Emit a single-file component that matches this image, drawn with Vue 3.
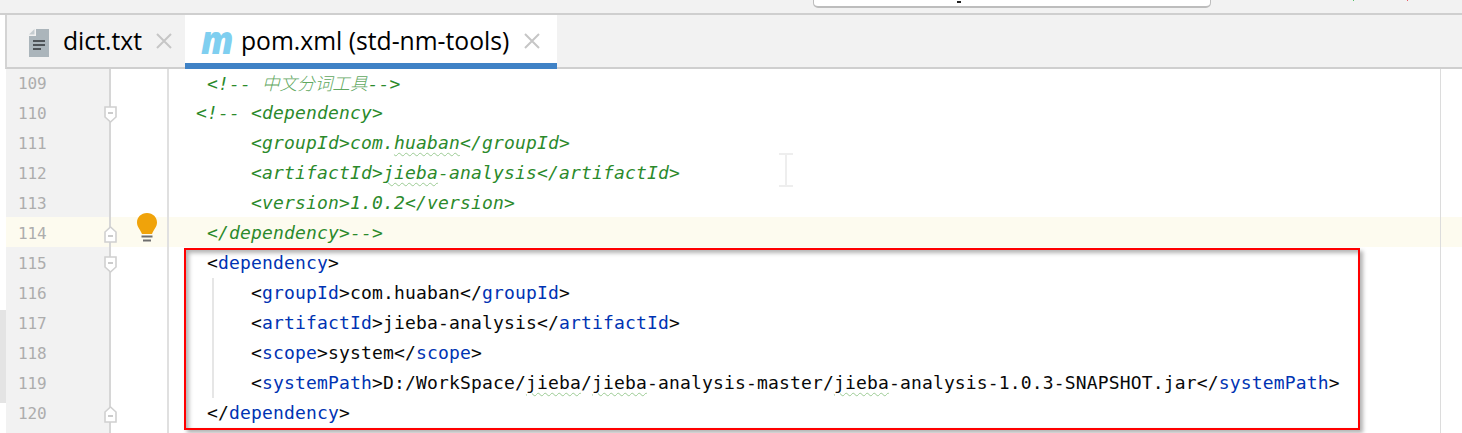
<script setup>
const tag = (open, name, rest = '') => [
  { k: 'p', t: open + '' },
  { k: 'n', t: name },
  { k: 'p', t: '>' + rest }
]
const com = (t, w) => ({ k: w ? 'c w' : 'c', t })
const lines = [
  { no: 109, segs: [com(' <!-- '), { k: 'c cjk', t: '中文分词工具' }, com('-->')] },
  { no: 110, fold: 'down', segs: [com('<!-- <dependency>')] },
  { no: 111, segs: [com('     <groupId>com.'), com('huaban', 1), com('</groupId>')] },
  { no: 112, segs: [com('     <artifactId>'), com('jieba', 1), com('-analysis</artifactId>')] },
  { no: 113, segs: [com('     <version>1.0.2</version>')] },
  { no: 114, fold: 'up', bulb: true, current: true, segs: [com(' </dependency>-->')] },
  { no: 115, fold: 'down', segs: tag(' <', 'dependency') },
  { no: 116, segs: [...tag('     <', 'groupId', 'com.huaban'), ...tag('</', 'groupId')] },
  { no: 117, segs: [...tag('     <', 'artifactId', 'jieba-analysis'), ...tag('</', 'artifactId')] },
  { no: 118, segs: [...tag('     <', 'scope', 'system'), ...tag('</', 'scope')] },
  {
    no: 119,
    segs: [
      ...tag('     <', 'systemPath', 'D:/WorkSpace/'),
      { k: 'p w', t: 'jieba' },
      { k: 'p', t: '/' },
      { k: 'p w', t: 'jieba' },
      { k: 'p', t: '-analysis-master/' },
      { k: 'p w', t: 'jieba' },
      { k: 'p', t: '-analysis-1.0.3-SNAPSHOT.jar' },
      ...tag('</', 'systemPath')
    ]
  },
  { no: 120, fold: 'up', segs: tag(' </', 'dependency') },
  { no: 121, hidden: true, segs: [] }
]
</script>

<template>
  <div class="page">
    <header class="top">
      <div class="search"><i class="speck"></i></div>
      <i class="dot green"></i>
      <i class="dot red"></i>
    </header>

    <nav class="tabs">
      <div class="tab">
        <svg class="file" width="20" height="28" viewBox="0 0 20 28">
          <path d="M7 0H20V28H0V7H7Z" fill="#abb5bb" />
          <path d="M5.500 0V5.500H0Z" fill="#c5ccd0" />
          <path d="M4 12H16M4 16H16M4 20H12" stroke="#4e5357" stroke-width="2" />
        </svg>
        <span class="label">dict.txt</span>
        <svg class="close" width="16" height="16" viewBox="0 0 16 16">
          <path d="M1 1L15 15M15 1L1 15" stroke="#c6c6c6" stroke-width="2" />
        </svg>
      </div>
      <div class="tab active">
        <span class="maven">m</span>
        <span class="label">pom.xml (std-nm-tools)</span>
        <svg class="close" width="16" height="16" viewBox="0 0 16 16">
          <path d="M1 1L15 15M15 1L1 15" stroke="#c6c6c6" stroke-width="2" />
        </svg>
      </div>
    </nav>

    <main class="editor">
      <div class="strip"><i class="thumb"></i></div>
      <div class="rows">
        <div v-for="l in lines" :key="l.no" class="row" :class="{ current: l.current }">
          <div class="num">
            <span v-if="!l.hidden">{{ l.no }}</span>
            <svg v-if="l.fold" class="fold" :class="l.fold" width="13" height="17" viewBox="0 0 13 17">
              <path d="M1 1H12V11L6.500 16L1 11Z" fill="#fff" stroke="#d0d0d0" stroke-width="1.600" />
              <path d="M4 7H9" stroke="#c0c0c0" stroke-width="1.600" />
            </svg>
          </div>
          <div class="mark">
            <svg v-if="l.bulb" class="bulb" width="22" height="30" viewBox="0 0 22 30">
              <path d="M11 0C5 0 1 4.300 1 9.500C1 14 4 16 6 21H16C18 16 21 14 21 9.500C21 4.300 17 0 11 0Z" fill="#f0a30a" />
              <path d="M5.500 23.500H16.500M7 27.500H15" stroke="#6e6e6e" stroke-width="2" />
            </svg>
          </div>
          <code class="code"><span v-for="(s, i) in l.segs" :key="i" :class="s.k">{{ s.t }}</span></code>
        </div>
      </div>

      <i class="margin"></i>
      <i class="guide"></i>
      <svg class="cursor" width="14" height="34" viewBox="0 0 14 34">
        <path d="M0 1H14M0 33H14M7 1V33" stroke="#eeeeee" stroke-width="2" fill="none" />
      </svg>
      <div class="selection"></div>
    </main>
  </div>
</template>

<style>
html,
body {
  margin: 0;
  background: #fff;
}
</style>

<style scoped>
.page {
  width: 1462px;
  height: 433px;
  overflow: hidden;
  display: flex;
  flex-direction: column;
  background: #fff;
}

.top {
  height: 13px;
  flex: none;
  background: #f2f2f2;
  border-bottom: 2px solid #cfcfcf;
  position: relative;
}

.search {
  position: absolute;
  left: 813px;
  top: -10px;
  width: 396px;
  height: 15px;
  background: #fff;
  border: 1px solid #bdbdbd;
  border-bottom-width: 2px;
  border-radius: 5px;
}

.speck {
  position: absolute;
  left: 143px;
  top: 10px;
  width: 4px;
  height: 2px;
  background: #222;
}

.dot {
  position: absolute;
  top: 0;
  width: 1px;
  height: 1px;
}

.dot.green {
  left: 1353px;
  background: #57c46a;
}

.dot.red {
  left: 1407px;
  background: #e8606a;
}

.tabs {
  height: 52px;
  flex: none;
  display: flex;
  background: #f2f2f2;
  border-bottom: 2px solid #cfcfcf;
  margin-left: 5px;
  border-left: 2px solid #d4d4d4;
  font-family: "Open Sans", "Noto Sans", sans-serif;
  font-size: 24.7px;
  color: #000;
  position: relative;
  z-index: 1;
}

.tab {
  display: flex;
  align-items: center;
  height: 100%;
  box-sizing: border-box;
}

.tab:first-child {
  width: 178px;
  padding-left: 22px;
}

.file {
  flex: none;
  margin-top: 4px;
}

.label {
  white-space: nowrap;
  line-height: 1;
}

.tab:first-child .label {
  margin-left: 14px;
}

.tab:first-child .close {
  margin-left: 14px;
}

.tab.active {
  width: 372px;
  height: 54px;
  background: #fff;
  border-bottom: 6px solid #3f82c6;
  padding-left: 16px;
  padding-top: 4px;
}

.tab.active .close {
  margin-left: 15px;
}

.maven {
  font-family: "Open Sans", sans-serif;
  font-weight: 800;
  font-style: italic;
  font-size: 39px;
  line-height: 1;
  color: #7fcff0;
  width: 40px;
  transform-origin: left center;
  transform: translateY(-3px) scaleX(0.9);
}

.editor {
  flex: 1;
  min-height: 0;
  display: flex;
  position: relative;
}

.strip {
  width: 6px;
  flex: none;
  position: relative;
}

.thumb {
  position: absolute;
  left: 0;
  top: 241px;
  width: 6px;
  height: 93px;
  background: #e4e4e4;
}

.rows {
  flex: 1;
  min-width: 0;
  margin-top: -2px;
}

.row {
  display: flex;
  height: 30px;
  font-family: "DejaVu Sans Mono", "Liberation Mono", monospace;
}

.row.current {
  background: #fdfbef;
}

.num {
  width: 105px;
  height: 30px;
  flex: none;
  box-sizing: border-box;
  padding: 2px 0 0 12px;
  background: #f2f2f2;
  border-right: 2px solid #d6d6d6;
  font-size: 16px;
  line-height: 30px;
  letter-spacing: -0.1px;
  color: #adadad;
  position: relative;
}

.row.current .num {
  background: #fdfbef;
}

.fold {
  position: absolute;
  right: -8px;
  top: 9px;
}

.fold.up {
  transform: scaleY(-1);
}

.mark {
  width: 58px;
  flex: none;
  box-sizing: border-box;
  border-right: 2px solid #e0e0e0;
  position: relative;
}

.bulb {
  position: absolute;
  left: 25px;
  top: -4px;
}

.code {
  padding: 1px 0 0 27px;
  font-family: inherit;
  font-size: 18px;
  line-height: 30px;
  height: 30px;
  box-sizing: border-box;
  letter-spacing: 0.16px;
  white-space: pre;
  color: #080808;
}

.n {
  color: #0033b3;
}

.c {
  color: #2b8a2b;
  font-style: italic;
}

.cjk {
  font-family: "Noto Sans CJK SC", sans-serif;
  font-size: 17.6px;
  font-weight: 300;
  letter-spacing: 0;
  color: #5fa85f;
}

.w {
  text-decoration: underline wavy #9ccb94 1px;
  text-underline-offset: 3px;
}

.margin {
  position: absolute;
  left: 1440px;
  top: 0;
  bottom: 0;
  width: 1px;
  background: #dcdcdc;
}

.guide {
  position: absolute;
  left: 212px;
  top: 209px;
  width: 2px;
  height: 120px;
  background: #e6e6e6;
}

.cursor {
  position: absolute;
  left: 779px;
  top: 84px;
}

.selection {
  position: absolute;
  left: 184px;
  top: 179px;
  width: 1172px;
  height: 178px;
  border: 2px solid #ff0000;
  box-shadow: 3px 3px 4px rgba(0, 0, 0, 0.3), inset 3px 3px 4px rgba(0, 0, 0, 0.3);
}
</style>
